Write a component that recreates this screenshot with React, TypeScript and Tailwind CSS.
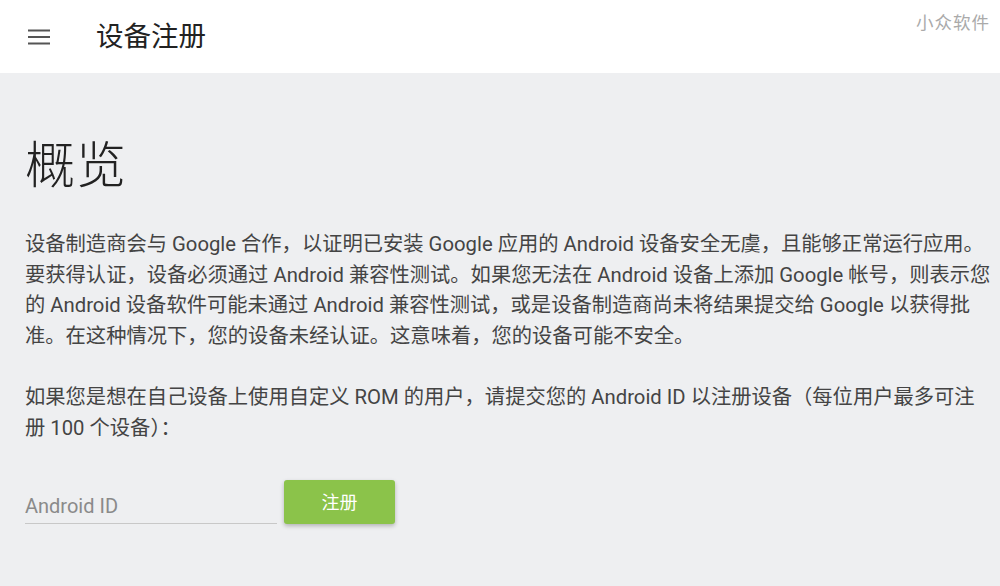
import { useState } from 'react';

const FONT = "font-['Roboto','Noto_Sans_CJK_SC',sans-serif]";

function MenuIcon() {
  return (
    <svg width="24" height="24" viewBox="0 0 24 24" className="text-[#555]">
      <path d="M1 5.5h22M1 12h22M1 18.5h22" stroke="currentColor" strokeWidth="2.2" />
    </svg>
  );
}

export default function App() {
  const [androidId, setAndroidId] = useState('');

  return (
    <div className={`${FONT} w-[1000px] h-[586px] bg-[#eeeff1] text-[#333] overflow-hidden`}>
      {/* 顶栏 */}
      <header className="relative h-[73px] bg-white flex items-center">
        <div className="pl-[27px] pr-[45px] flex items-center">
          <MenuIcon />
        </div>
        <h1 className="text-[27.5px] text-[#222] leading-none">设备注册</h1>
        <span className="absolute right-[10px] top-[10px] text-[17.5px] text-[#aaa] tracking-[1px]">小众软件</span>
      </header>

      {/* 内容 */}
      <main className="px-[25px] pt-[68px]">
        <h2 className="text-[50px] font-extralight leading-none text-[#222] tracking-[1px]">概览</h2>

        <p className="mt-[38px] text-[20.3px] leading-[30.5px] text-[#444] whitespace-nowrap">
          设备制造商会与 Google 合作，以证明已安装 Google 应用的 Android 设备安全无虞，且能够正常运行应用。
          <br />
          要获得认证，设备必须通过 Android 兼容性测试。如果您无法在 Android 设备上添加 Google 帐号，则表示您
          <br />
          的 Android 设备软件可能未通过 Android 兼容性测试，或是设备制造商尚未将结果提交给 Google 以获得批
          <br />
          准。在这种情况下，您的设备未经认证。这意味着，您的设备可能不安全。
        </p>

        <p className="mt-[31px] text-[20.3px] leading-[30.5px] text-[#444] whitespace-nowrap">
          如果您是想在自己设备上使用自定义 ROM 的用户，请提交您的 Android ID 以注册设备（每位用户最多可注
          <br />
          册 100 个设备）：
        </p>

        <div className="mt-[37px] flex items-start gap-[7px]">
          <input
            value={androidId}
            onChange={(e) => setAndroidId(e.target.value)}
            placeholder="Android ID"
            className="mt-[9px] w-[252px] h-[35px] bg-transparent border-b border-[#c8c8c8] text-[20px] text-[#333] placeholder:text-[#8a8a8a] outline-none"
          />
          <button className="w-[111px] h-[44px] rounded-[3px] bg-[#8bc34a] text-white text-[18px] shadow-[0_2px_4px_rgba(0,0,0,0.25)]">
            注册
          </button>
        </div>
      </main>
    </div>
  );
}
